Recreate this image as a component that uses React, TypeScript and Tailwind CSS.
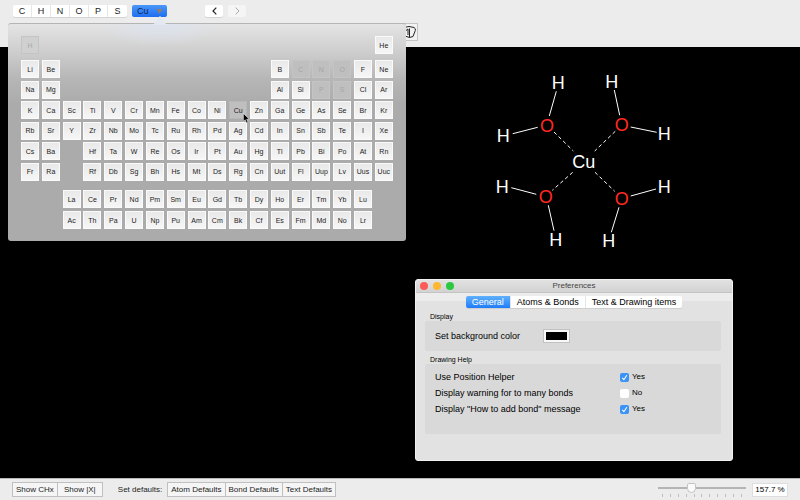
import { useState } from "react";
import clsx from "clsx";

const favorites = ["C", "H", "N", "O", "P", "S"];

// "" is an empty spot in the table, a leading "-" marks an element already on the toolbar
const mainRows = [
  ["Li", "Be", "", "", "", "", "", "", "", "", "", "", "B", "-C", "-N", "-O", "F", "Ne"],
  ["Na", "Mg", "", "", "", "", "", "", "", "", "", "", "Al", "Si", "-P", "-S", "Cl", "Ar"],
  ["K", "Ca", "Sc", "Ti", "V", "Cr", "Mn", "Fe", "Co", "Ni", "Cu", "Zn", "Ga", "Ge", "As", "Se", "Br", "Kr"],
  ["Rb", "Sr", "Y", "Zr", "Nb", "Mo", "Tc", "Ru", "Rh", "Pd", "Ag", "Cd", "In", "Sn", "Sb", "Te", "I", "Xe"],
  ["Cs", "Ba", "", "Hf", "Ta", "W", "Re", "Os", "Ir", "Pt", "Au", "Hg", "Tl", "Pb", "Bi", "Po", "At", "Rn"],
  ["Fr", "Ra", "", "Rf", "Db", "Sg", "Bh", "Hs", "Mt", "Ds", "Rg", "Cn", "Uut", "Fl", "Uup", "Lv", "Uus", "Uuc"],
];

const firstRow = ["-H", "", "", "", "", "", "", "", "", "", "", "", "", "", "", "", "", "He"];

const innerRows = [
  ["", "", "La", "Ce", "Pr", "Nd", "Pm", "Sm", "Eu", "Gd", "Tb", "Dy", "Ho", "Er", "Tm", "Yb", "Lu", ""],
  ["", "", "Ac", "Th", "Pa", "U", "Np", "Pu", "Am", "Cm", "Bk", "Cf", "Es", "Fm", "Md", "No", "Lr", ""],
];

function ElementCell({ value, active, onPick }: { value: string; active: boolean; onPick: (v: string) => void }) {
  if (!value) return <span />;
  const disabled = value.startsWith("-");
  const symbol = disabled ? value.slice(1) : value;

  return (
    <button
      type="button"
      disabled={disabled}
      onClick={() => onPick(symbol)}
      className={clsx(
        "flex size-[18px] items-center justify-center border text-[7px] leading-none",
        disabled && symbol === "H" && "border-[#c4c4c4] bg-[#d0d0d0] text-[#a8a8a8]",
        disabled && symbol !== "H" && "border-[#c4c4c4] bg-[#bfbfbf] text-[#a6a6a6]",
        !disabled && active && "border-[#b8b8b8] bg-[#bfbfbf] text-[#222]",
        !disabled && !active && "border-[#fafafa] bg-linear-to-b from-[#e9e9e9] to-[#f6f6f6] text-[#1c1c1c]"
      )}
    >
      {symbol}
    </button>
  );
}

function ElementGrid({ rows, selected, onPick, className }: {
  rows: string[][];
  selected: string;
  onPick: (v: string) => void;
  className: string;
}) {
  return (
    <div className={clsx("grid grid-cols-[repeat(18,18px)] content-between justify-between", className)}>
      {rows.flat().map((v, i) => (
        <ElementCell key={i} value={v} active={v === selected} onPick={onPick} />
      ))}
    </div>
  );
}

function PeriodicPopover({ selected, onPick }: { selected: string; onPick: (v: string) => void }) {
  return (
    <div className="absolute top-[23px] left-2 z-20 w-[398px] rounded-[3px] border-t border-[#b4b4b4] bg-[linear-gradient(#e4e4e4_0px,#d0d0d0_25px,#b6b6b6_55px,#ababab_80px,#ababab_100%)] px-[13px] pt-3 pb-3">
      <div className="absolute inset-x-0 top-0 h-14 bg-[radial-gradient(ellipse_60px_22px_at_152px_0px,#dce2ee,transparent)]" />
      <svg className="absolute -top-[9px] left-36" width="16" height="10" viewBox="0 0 16 10">
        <path d="M0 10C4 9 5.500 2 8 1c2.500 1 4 8 8 9z" fill="#e3e8f1" />
      </svg>
      <div className="relative">
        <ElementGrid rows={[firstRow]} selected={selected} onPick={onPick} className="mb-1.5" />
        <ElementGrid rows={mainRows} selected={selected} onPick={onPick} className="mb-[9px] h-[121px]" />
        <ElementGrid rows={innerRows} selected={selected} onPick={onPick} className="h-[39px]" />
      </div>
      <svg className="absolute top-[89px] left-[235px]" width="7" height="11" viewBox="0 0 7 11">
        <path d="M.4.4v8l1.800-1.600 1.300 3.200 1.500-.6-1.300-3.100h2.600z" fill="#000" stroke="#fff" strokeWidth=".5" />
      </svg>
    </div>
  );
}

const atoms = [
  { label: "H", x: 78.3, y: 22.7 },
  { label: "H", x: 131.7, y: 21.3 },
  { label: "H", x: 23.3, y: 75.3 },
  { label: "H", x: 184.3, y: 74 },
  { label: "H", x: 22.3, y: 126.3 },
  { label: "H", x: 184.3, y: 127 },
  { label: "H", x: 75.7, y: 179.5 },
  { label: "H", x: 128.7, y: 180.7 },
  { label: "O", x: 67, y: 65.7 },
  { label: "O", x: 141.7, y: 64.7 },
  { label: "O", x: 65.7, y: 136.7 },
  { label: "O", x: 141.7, y: 138.3 },
  { label: "Cu", x: 103.7, y: 101.7 },
];

function Molecule() {
  return (
    <svg className="absolute top-[13px] left-[480px]" width="210" height="200" viewBox="0 0 210 200">
      <g stroke="#fff" strokeWidth="1">
        <path d="M76.300 31.300 69.300 56M32.700 73.700 57.700 67.300M134.300 30 139.700 55.300M150.700 67 176.700 72.300M31.300 127.700 56.300 134.300M68.300 145.300 74 170.700M150.700 136 176 129M139 147.300 131.300 172.300" />
        <path d="M74 72 93.300 91M135.300 71.300 114.700 91M92.700 112.300 72.300 130.300M115 112.300 134.700 131.300" strokeDasharray="3.600 2.800" />
      </g>
      {atoms.map((a, i) => (
        <text key={i} x={a.x} y={a.y + 6.4} fontSize="18" textAnchor="middle" fill={a.label === "O" ? "#ff2a22" : "#fff"}>
          {a.label}
        </text>
      ))}
    </svg>
  );
}

const helpOptions = [
  { id: "position", label: "Use Position Helper", on: true },
  { id: "warning", label: "Display warning for to many bonds", on: false },
  { id: "bond", label: 'Display "How to add bond" message', on: true },
];

function HelpRow({ id, label, on }: { id: string; label: string; on: boolean }) {
  const [checked, setChecked] = useState(on);
  return (
    <div className="flex h-4 items-center leading-none">
      <label htmlFor={id} className="w-[185px] text-[9px]">{label}</label>
      <label className="flex items-center gap-[3px] text-[8px]">
        <span className="relative flex">
          <input
            id={id}
            type="checkbox"
            checked={checked}
            onChange={(e) => setChecked(e.target.checked)}
            className="size-[9px] appearance-none rounded-[2px] bg-white checked:bg-[#3b93f7]"
          />
          {checked && (
            <svg className="pointer-events-none absolute inset-0" width="9" height="9" viewBox="0 0 9 9">
              <path d="M2.300 4.900 3.900 6.700 6.800 2.200" fill="none" stroke="#fff" strokeWidth="1.100" />
            </svg>
          )}
        </span>
        {checked ? "Yes" : "No"}
      </label>
    </div>
  );
}

function Preferences() {
  const [tab, setTab] = useState("General");
  return (
    <section className="absolute top-[232px] left-[415px] w-[318px] rounded-[3px] border border-[#f2f2f2] bg-[#e2e2e2] text-black">
      <header className="flex h-[13px] items-center rounded-t-[3px] border-b border-[#c4c4c4] bg-linear-to-b from-[#e2e2e2] to-[#d2d2d2] px-1">
        <div className="flex flex-1 gap-1">
          <button type="button" aria-label="Close" className="size-2 rounded-full bg-[#fc5b57]" />
          <button type="button" aria-label="Minimize" className="mx-px size-2 rounded-full bg-[#fdb82f]" />
          <button type="button" aria-label="Zoom" className="size-2 rounded-full bg-[#2bc840]" />
        </div>
        <h2 className="text-[8px] leading-none text-[#444]">Preferences</h2>
        <div className="flex-1" />
      </header>
      <div className="flex justify-center bg-[linear-gradient(#ececec_8px,#e2e2e2_8px)] pt-[3px]">
        <div className="flex h-3 overflow-hidden rounded-[2px] bg-white text-[9px] leading-none shadow-[0_1px_0_#cfcfcf]">
          {["General", "Atoms & Bonds", "Text & Drawing items"].map((t) => (
            <button
              key={t}
              type="button"
              onClick={() => setTab(t)}
              className={clsx(
                "border-r border-[#e4e4e4] px-[6px] last:border-0",
                tab === t && "bg-linear-to-b from-[#5fb0fb] to-[#1f7cf8] text-white"
              )}
            >
              {t}
            </button>
          ))}
        </div>
      </div>
      <div className="pt-1 pr-[11px] pb-[26px] pl-[9px]">
        <h3 className="px-[5px] text-[7px] leading-[9px]">Display</h3>
        <div className="flex h-[30px] items-center rounded-[2px] bg-[#d9d9d9] px-[10px]">
          <label htmlFor="bg" className="w-[108px] text-[9px] leading-none">Set background color</label>
          <input
            id="bg"
            type="color"
            defaultValue="#000000"
            className="h-[14px] w-[27px] appearance-none border border-[#c2c2c2] bg-[#f8f8f8] p-[2px] [&::-webkit-color-swatch]:rounded-none [&::-webkit-color-swatch]:border-0 [&::-webkit-color-swatch-wrapper]:p-0"
          />
        </div>
        <h3 className="mt-1 px-[5px] text-[7px] leading-[9px]">Drawing Help</h3>
        <div className="rounded-[2px] bg-[#d9d9d9] px-[10px] pt-[5px] pb-[17px]">
          {helpOptions.map((o) => (
            <HelpRow key={o.id} {...o} />
          ))}
        </div>
      </div>
    </section>
  );
}

function FooterGroup({ items }: { items: string[] }) {
  return (
    <div className="flex h-[15px] divide-x divide-[#c0c0c0] border border-[#c0c0c0] bg-[#f5f5f5]">
      {items.map((t) => (
        <button key={t} type="button" className="min-w-11 px-[3px] text-[8px] leading-none whitespace-nowrap">{t}</button>
      ))}
    </div>
  );
}

export default function App() {
  const [element, setElement] = useState("Cu");
  const [zoom, setZoom] = useState(37);

  return (
    <div className="flex min-h-screen flex-col bg-black font-['Liberation_Sans',Arial,sans-serif] text-[#1c1c1c]">
      <header className="relative bg-[#ececec] pt-[5px] pb-1.5 pl-[13px]">
        <div className="flex h-3 items-stretch text-[9px] leading-none">
          <div className="flex divide-x divide-[#e6e6e6] rounded-[2px] bg-white shadow-[0_1px_0_#d4d4d4]">
            {favorites.map((s) => (
              <button key={s} type="button" className="w-[19px]" onClick={() => setElement(s)}>{s}</button>
            ))}
          </div>
          <button type="button" className="ml-[5px] flex w-[35px] items-center justify-between rounded-[2px] bg-linear-to-b from-[#4b97f8] to-[#1c6ef0] px-[5px] text-[#0d2a5c]">
            {element}
            <svg width="5" height="5" viewBox="0 0 5 5">
              <path d="M0 0h5L2.500 5z" fill="#9c7b62" />
            </svg>
          </button>
          <button type="button" aria-label="Back" className="ml-[38px] flex w-[18px] items-center justify-center rounded-[2px] bg-white shadow-[0_1px_0_#d4d4d4]">
            <svg width="5" height="8" viewBox="0 0 5 8"><path d="M4.300.6 1 4l3.300 3.400" fill="none" stroke="#222" strokeWidth="1.200" /></svg>
          </button>
          <button type="button" aria-label="Forward" disabled className="ml-[5px] flex w-[18px] items-center justify-center rounded-[2px] bg-[#f5f5f5]">
            <svg width="5" height="8" viewBox="0 0 5 8"><path d="M.7.6 4 4 .7 7.400" fill="none" stroke="#aaa" strokeWidth="1" /></svg>
          </button>
        </div>
        <div className="flex pt-1.5 pl-[387px]">
          <button type="button" aria-label="Lasso tool" className="flex h-[18px] w-[18px] items-center justify-center border border-[#c4c4c4] bg-[#f2f2f2]">
            <svg width="16" height="14" viewBox="0 0 16 14" fill="none" stroke="#222">
              <path d="M3 2.500 8 1.500 13 2.500Q15 3.500 14.300 5.500L12 11.500 8.500 12.500 4 11M8.500 3.500v9M5 5.500 7 4v6" />
            </svg>
          </button>
        </div>
        <PeriodicPopover selected={element} onPick={setElement} />
      </header>

      <main className="relative flex-1">
        <Molecule />
        <Preferences />
      </main>

      <footer className="flex h-[22px] items-center border-t border-[#b8b8b8] bg-[#ececec] pr-3 pl-3 text-[8px]">
        <FooterGroup items={["Show CHx", "Show |X|"]} />
        <span className="mr-[5px] ml-[15px] leading-none">Set defaults:</span>
        <FooterGroup items={["Atom Defaults", "Bond Defaults", "Text Defaults"]} />
        <div className="ml-auto flex w-[88px] flex-col">
          <input
            type="range"
            aria-label="Zoom level"
            min="0"
            max="100"
            value={zoom}
            onChange={(e) => setZoom(Number(e.target.value))}
            className="h-[11px] w-full appearance-none bg-[linear-gradient(#b4b4b4,#b4b4b4)] bg-size-[100%_2px] bg-center bg-no-repeat [&::-webkit-slider-thumb]:h-[10px] [&::-webkit-slider-thumb]:w-[9px] [&::-webkit-slider-thumb]:appearance-none [&::-webkit-slider-thumb]:rounded-t-[2px] [&::-webkit-slider-thumb]:rounded-b-[5px] [&::-webkit-slider-thumb]:border [&::-webkit-slider-thumb]:border-[#c4c4c4] [&::-webkit-slider-thumb]:bg-[#fafafa]"
          />
          <div className="flex justify-between px-1">
            {Array.from({ length: 11 }, (_, i) => (
              <span key={i} className="h-[3px] w-px bg-[#bdbdbd]" />
            ))}
          </div>
        </div>
        <input
          aria-label="Zoom value"
          defaultValue="157.7 %"
          className="ml-1.5 h-[14px] w-9 border border-[#dedede] bg-white text-center text-[8px] text-black"
        />
      </footer>
    </div>
  );
}
